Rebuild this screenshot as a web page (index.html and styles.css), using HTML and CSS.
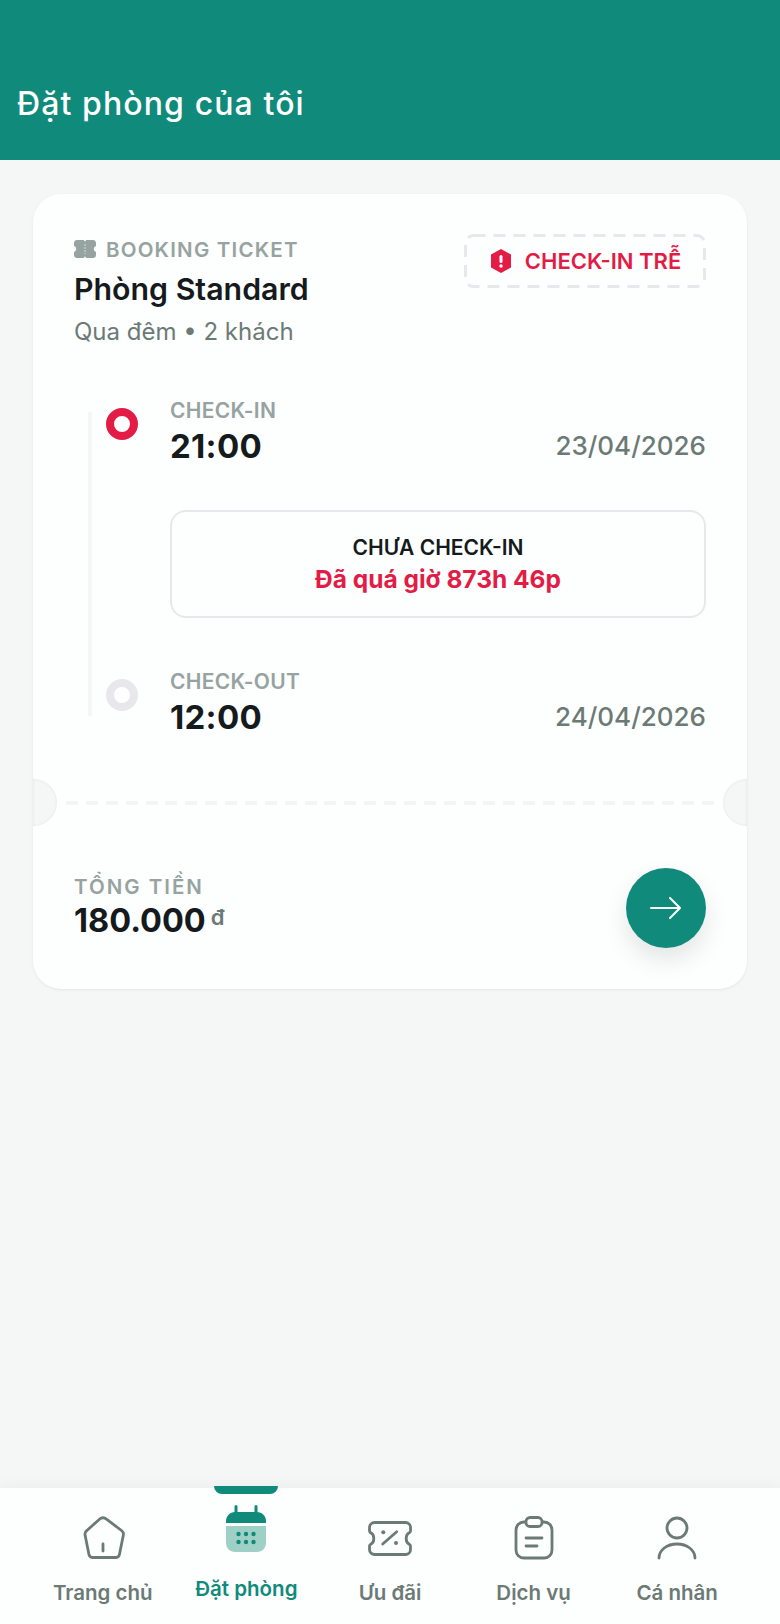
FILE: index.html
```html
<!DOCTYPE html>
<html lang="vi">
<head>
  <meta charset="UTF-8" />
  <meta name="viewport" content="width=device-width, initial-scale=1.0">
  <title>Đặt phòng của tôi</title>
  <link rel="stylesheet" href="styles.css">
</head>
<body>
  <div class="app">
    <header class="topbar">
      <h1>Đặt phòng của tôi</h1>
    </header>

    <main class="content">
      <div class="card">
        <div class="card-top">
          <div class="head-row">
            <div>
              <div class="kicker">
                <svg class="kicker-icon" viewBox="0 0 22 18"><path fill="#97a3a1" d="M3 0h6.500c.5 0 .8.600.8 1.200h1.400c0-.6.300-1.200.8-1.200H19c1.700 0 3 1.300 3 3v3c-1.500.4-2.200 1.600-2.200 3s.7 2.600 2.200 3v3c0 1.700-1.300 3-3 3h-6.500c-.5 0-.8-.6-.8-1.200h-1.400c0 .6-.3 1.200-.8 1.200H3c-1.700 0-3-1.300-3-3v-3c1.500-.4 2.200-1.600 2.200-3S1.500 6.400 0 6V3c0-1.700 1.300-3 3-3z"/><path d="M11 4v10" stroke="#c9d0cf" stroke-width="1.200" stroke-dasharray="2 1"/></svg>
                <span>BOOKING TICKET</span>
              </div>
              <div class="room-name">Phòng Standard</div>
              <div class="room-sub">Qua đêm • 2 khách</div>
            </div>
            <div class="late-badge">
              <svg class="late-border" width="242" height="54"><rect x="1.500" y="1.500" width="239" height="51" rx="8" fill="none" stroke="#e8e8ec" stroke-width="3" stroke-dasharray="12 8"/></svg>
              <svg class="late-icon" viewBox="0 0 22 24"><path fill="#e31c46" d="M11 0l10 5.500v13L11 24 1 18.500v-13z"/><rect x="9.500" y="6" width="3" height="8" rx="1.500" fill="#fff"/><circle cx="11" cy="17" r="1.700" fill="#fff"/></svg>
              <span>CHECK-IN TRỄ</span>
            </div>
          </div>

          <div class="timeline">
            <div class="tl-row">
              <span class="dot dot-red"></span>
              <div class="tl-main">
                <div class="tl-label">CHECK-IN</div>
                <div class="tl-time">21:00</div>
              </div>
              <div class="tl-date">23/04/2026</div>
            </div>

            <div class="status-box">
              <div class="status-title">CHƯA CHECK-IN</div>
              <div class="status-late">Đã quá giờ 873h 46p</div>
            </div>

            <div class="tl-row">
              <span class="dot dot-grey"></span>
              <div class="tl-main">
                <div class="tl-label">CHECK-OUT</div>
                <div class="tl-time">12:00</div>
              </div>
              <div class="tl-date">24/04/2026</div>
            </div>
          </div>
        </div>

        <div class="tear">
          <span class="notch notch-left"></span>
          <span class="notch notch-right"></span>
        </div>

        <div class="card-bottom">
          <div class="total">
            <div class="total-label">TỔNG TIỀN</div>
            <div class="total-value">180.000<span class="currency">đ</span></div>
          </div>
          <button class="go-btn">
            <svg viewBox="0 0 32 24" width="32" height="24"><path d="M1 12h29M20 2l10 10-10 10" fill="none" stroke="#fff" stroke-width="2" stroke-linecap="round" stroke-linejoin="round"/></svg>
          </button>
        </div>
      </div>
    </main>

    <nav class="tabbar">
      <div class="tab">
        <svg class="tab-icon" viewBox="0 0 48 48"><path d="M20.500 4.200c2-1.600 5-1.600 7 0l15 11.300c1.500 1.100 2.200 2.900 1.800 4.700l-3.800 19c-.4 2-2.100 3.300-4.100 3.300H14c-2 0-3.700-1.300-4.100-3.300l-3.800-19c-.4-1.800.3-3.600 1.800-4.700z" fill="none" stroke="#6c7a76" stroke-width="2.800" stroke-linejoin="round"/><path d="M24 29v7" stroke="#6c7a76" stroke-width="2.800" stroke-linecap="round"/></svg>
        <span>Trang chủ</span>
      </div>
      <div class="tab tab-active">
        <svg class="tab-icon" viewBox="0 0 48 48"><path d="M14 1.500v8M34 1.500v8" stroke="#108a7a" stroke-width="3" stroke-linecap="round"/><path d="M4 18v-2c0-5 4-9 9-9h22c5 0 9 4 9 9v2z" fill="#108a7a"/><path d="M4 21h40v17c0 5-4 9-9 9H13c-5 0-9-4-9-9z" fill="#9fd0c6"/><g fill="#108a7a"><circle cx="16.500" cy="29" r="2.200"/><circle cx="24" cy="29" r="2.200"/><circle cx="31.500" cy="29" r="2.200"/><circle cx="16.500" cy="37" r="2.200"/><circle cx="24" cy="37" r="2.200"/><circle cx="31.500" cy="37" r="2.200"/></g></svg>
        <span>Đặt phòng</span>
      </div>
      <div class="tab">
        <svg class="tab-icon" viewBox="0 0 48 48"><path d="M8.500 7.500h31c2.800 0 5 2.200 5 5V16c0 1-.8 1.500-1.600 2-3.600 1.800-3.600 9.200 0 11 .8.500 1.600 1 1.600 2v3.500c0 2.800-2.200 5-5 5h-31c-2.800 0-5-2.200-5-5V31c0-1 .8-1.500 1.600-2 3.600-1.800 3.600-9.200 0-11-.8-.5-1.600-1-1.600-2v-3.500c0-2.800 2.200-5 5-5z" fill="none" stroke="#6c7a76" stroke-width="2.800" stroke-linejoin="round"/><path d="M16.700 29l14-12.300" stroke="#6c7a76" stroke-width="2.800" stroke-linecap="round"/><circle cx="17.300" cy="17.300" r="2" fill="#6c7a76"/><circle cx="30" cy="28" r="2" fill="#6c7a76"/></svg>
        <span>Ưu đãi</span>
      </div>
      <div class="tab">
        <svg class="tab-icon" viewBox="0 0 48 48"><path d="M16 7h-2c-4.500 0-8 3.500-8 8v20c0 4.500 3.500 8 8 8h20c4.500 0 8-3.500 8-8V15c0-4.500-3.500-8-8-8h-2" fill="none" stroke="#6c7a76" stroke-width="2.800"/><rect x="16" y="2.500" width="16" height="9" rx="4" fill="none" stroke="#6c7a76" stroke-width="2.800"/><path d="M16 23h16M16 31h11" stroke="#6c7a76" stroke-width="2.800" stroke-linecap="round"/></svg>
        <span>Dịch vụ</span>
      </div>
      <div class="tab">
        <svg class="tab-icon" viewBox="0 0 48 48"><circle cx="24" cy="13" r="10" fill="none" stroke="#6c7a76" stroke-width="2.800"/><path d="M6 43c0-8 8-14 18-14s18 6 18 14" fill="none" stroke="#6c7a76" stroke-width="2.800" stroke-linecap="round"/></svg>
        <span>Cá nhân</span>
      </div>
    </nav>
  </div>
</body>
</html>
```
FILE: styles.css
```css
* {
  box-sizing: border-box;
}

body {
  margin: 0;
  background-color: #f5f6f6;
  color: #151a1c;
  font-family: Inter, "Noto Sans", sans-serif;
}

.app {
  width: 780px;
  height: 1624px;
  display: flex;
  flex-direction: column;
}

.topbar {
  height: 160px;
  flex: none;
  background: #108a7a;
  padding: 84px 17px 0;
}

.topbar h1 {
  margin: 0;
  color: #fff;
  font-size: 32px;
  line-height: 40px;
  font-weight: 500;
  letter-spacing: 1.100px;
}

.content {
  flex: 1;
  padding: 34px 33px 0;
}

.card {
  background: #fdfefe;
  border-radius: 28px;
  box-shadow: 0 1px 3px rgba(0, 0, 0, 0.07);
}

.card-top {
  padding: 41px 41px 0;
}

.head-row {
  display: flex;
  justify-content: space-between;
  align-items: flex-start;
}

.kicker {
  display: flex;
  align-items: center;
  gap: 10px;
  height: 28px;
  color: #97a3a1;
  font-size: 20.500px;
  font-weight: 600;
  letter-spacing: 1.200px;
}

.kicker-icon {
  width: 22px;
  height: 18px;
}

.room-name {
  margin-top: 7px;
  font-size: 30.300px;
  line-height: 38px;
  font-weight: 600;
}

.room-sub {
  margin-top: 8px;
  color: #6c7a76;
  font-size: 24px;
  line-height: 32px;
}

.late-badge {
  position: relative;
  display: flex;
  align-items: center;
  justify-content: center;
  gap: 13px;
  width: 242px;
  height: 54px;
  margin-top: -1px;
  padding-left: 1px;
  color: #e31c46;
  font-size: 22px;
  font-weight: 600;
}

.late-border {
  position: absolute;
  left: 0;
  top: 0;
}

.late-icon {
  width: 22px;
  height: 24px;
}

.timeline {
  position: relative;
  margin-top: 49px;
  padding-left: 96px;
}

.timeline::before {
  content: "";
  position: absolute;
  left: 14px;
  top: 15px;
  width: 4px;
  height: 304px;
  background: #f5f6f6;
}

.tl-row {
  position: relative;
  display: flex;
  justify-content: space-between;
  align-items: flex-end;
}

.dot {
  position: absolute;
  left: -64px;
  top: 11px;
  width: 32px;
  height: 32px;
  border-radius: 50%;
  background: #fff;
  border: 8px solid #e31c46;
}

.dot-grey {
  border-color: #e8e8ec;
}

.tl-label {
  color: #97a3a1;
  font-size: 21px;
  line-height: 28px;
  font-weight: 600;
  letter-spacing: 0.300px;
}

.tl-time {
  font-size: 33px;
  line-height: 42px;
  font-weight: 700;
  letter-spacing: 0.300px;
}

.tl-date {
  color: #6c7a76;
  font-size: 26px;
  line-height: 42px;
  font-weight: 500;
}

.status-box {
  margin: 43px 0 50px;
  height: 108px;
  border: 2px solid #e8e8ec;
  border-radius: 16px;
  display: flex;
  flex-direction: column;
  align-items: center;
  justify-content: center;
}

.status-title {
  font-size: 21px;
  line-height: 30px;
  font-weight: 600;
}

.status-late {
  color: #e31c46;
  font-size: 24.500px;
  line-height: 32px;
  font-weight: 700;
}

.tear {
  position: relative;
  height: 4px;
  margin: 63px 33px 0;
  background: repeating-linear-gradient(to right, #f3f4f4 0, #f3f4f4 12px, transparent 12px, transparent 19.875px);
}

.notch {
  position: absolute;
  top: -22px;
  width: 24px;
  height: 47px;
  background: #f5f6f6;
  box-shadow: inset 0 0 3px rgba(0, 0, 0, 0.08);
}

.notch-left {
  left: -33px;
  border-radius: 0 24px 24px 0;
}

.notch-right {
  right: -33px;
  border-radius: 24px 0 0 24px;
}

.card-bottom {
  display: flex;
  justify-content: space-between;
  align-items: center;
  padding: 63px 41px 41px;
}

.total {
  padding-top: 3px;
}

.total-label {
  color: #97a3a1;
  font-size: 20.500px;
  line-height: 26px;
  font-weight: 600;
  letter-spacing: 2px;
}

.total-value {
  font-size: 32.500px;
  line-height: 42px;
  font-weight: 700;
}

.currency {
  position: relative;
  top: -7px;
  margin-left: 5px;
  color: #6c7a76;
  font-size: 22px;
  font-weight: 600;
}

.go-btn {
  width: 80px;
  height: 80px;
  border: none;
  border-radius: 50%;
  background: #108a7a;
  display: flex;
  align-items: center;
  justify-content: center;
  box-shadow: 0 12px 24px rgba(0, 0, 0, 0.1);
}

.tabbar {
  position: relative;
  flex: none;
  height: 136px;
  background: #fdfefe;
  box-shadow: 0 -3px 14px rgba(0, 0, 0, 0.04);
  display: flex;
  padding: 0 31px;
}

.tab {
  flex: 1;
  display: flex;
  flex-direction: column;
  align-items: center;
  padding-top: 27px;
  color: #6c7a76;
  font-size: 20.500px;
  font-weight: 600;
}

.tab span {
  margin-top: 16px;
  line-height: 28px;
}

.tab-icon {
  width: 48px;
  height: 48px;
  display: block;
}

.tab-active {
  position: relative;
  padding-top: 17px;
  color: #108a7a;
}

.tab-active span {
  margin-top: 22px;
}

.tab-active::before {
  content: "";
  position: absolute;
  top: -2px;
  left: 50%;
  width: 64px;
  height: 8px;
  margin-left: -32px;
  background: #108a7a;
  border-radius: 0 0 10px 10px;
}
```
